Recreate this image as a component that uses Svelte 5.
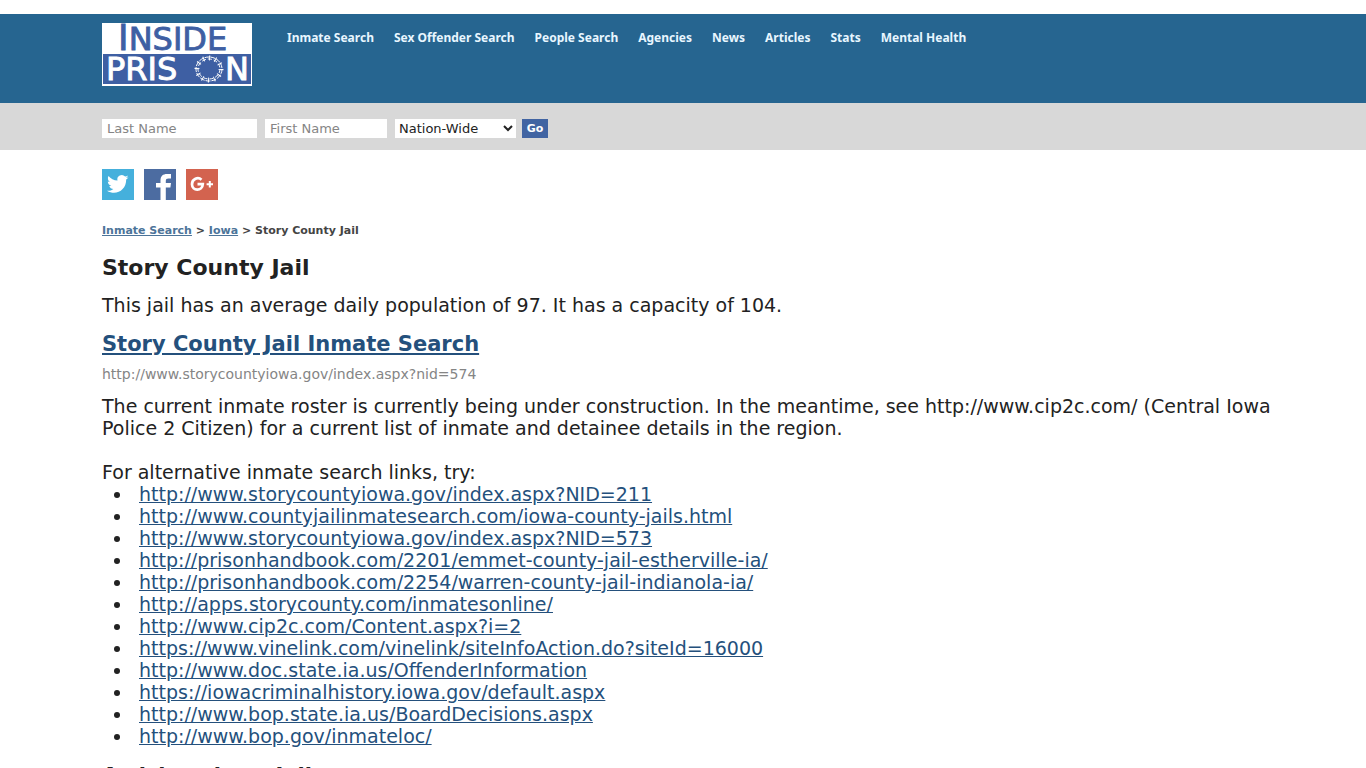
<script lang="ts">
	const nav = [
		'Inmate Search',
		'Sex Offender Search',
		'People Search',
		'Agencies',
		'News',
		'Articles',
		'Stats',
		'Mental Health'
	];

	const links = [
		'http://www.storycountyiowa.gov/index.aspx?NID=211',
		'http://www.countyjailinmatesearch.com/iowa-county-jails.html',
		'http://www.storycountyiowa.gov/index.aspx?NID=573',
		'http://prisonhandbook.com/2201/emmet-county-jail-estherville-ia/',
		'http://prisonhandbook.com/2254/warren-county-jail-indianola-ia/',
		'http://apps.storycounty.com/inmatesonline/',
		'http://www.cip2c.com/Content.aspx?i=2',
		'https://www.vinelink.com/vinelink/siteInfoAction.do?siteId=16000',
		'http://www.doc.state.ia.us/OffenderInformation',
		'https://iowacriminalhistory.iowa.gov/default.aspx',
		'http://www.bop.state.ia.us/BoardDecisions.aspx',
		'http://www.bop.gov/inmateloc/'
	];

	let lastName = $state('');
	let firstName = $state('');
	let region = $state('Nation-Wide');
</script>

<div class="page">
	<header>
		<div class="wrap top">
			<a class="logo" href="/" aria-label="Inside Prison">
				<svg width="150" height="63" viewBox="0 0 150 63">
					<rect width="150" height="63" fill="#fff" />
					<rect x="1" y="31" width="148" height="30" fill="#3e5fa3" />
					<g font-family="DejaVu Sans, sans-serif" font-size="32" stroke-width="0.9">
						<text x="16" y="27" fill="#3e5fa3" stroke="#3e5fa3"
							><tspan font-size="36">I</tspan>NSIDE</text
						>
						<g fill="#fff" stroke="#fff">
							<text x="4" y="57">PRIS</text>
							<text x="123" y="57">N</text>
						</g>
					</g>
					<g fill="none" stroke="#fff">
						<ellipse cx="107" cy="46" rx="13" ry="12" stroke-dasharray="5 1" />
						<ellipse cx="107" cy="46" rx="11" ry="10" stroke-dasharray="4 2" />
						<ellipse
							cx="107"
							cy="46"
							rx="12"
							ry="11"
							stroke-width="5"
							stroke-dasharray="1 5"
						/>
					</g>
				</svg>
			</a>
			<nav>
				{#each nav as item}
					<a href="#top">{item}</a>
				{/each}
			</nav>
		</div>
	</header>

	<div class="search">
		<form class="wrap" onsubmit={(e) => e.preventDefault()}>
			<input class="last" type="text" placeholder="Last Name" aria-label="Last Name" bind:value={lastName} />
			<input class="first" type="text" placeholder="First Name" aria-label="First Name" bind:value={firstName} />
			<select aria-label="State" bind:value={region}>
				<option>Nation-Wide</option>
				<option>Iowa</option>
			</select>
			<button type="submit">Go</button>
		</form>
	</div>

	<main class="wrap">
		<div class="social">
			<a href="#twitter" aria-label="Twitter">
				<svg width="32" height="31" viewBox="0 0 32 31">
					<rect width="32" height="31" fill="#45b0dc" />
					<path
						fill="#fff"
						d="M26.500 8.200c-.8.4-1.600.6-2.500.7.9-.5 1.600-1.400 1.900-2.400-.8.500-1.800.9-2.800 1.100a4.400 4.400 0 0 0-7.600 4c-3.600-.2-6.900-1.900-9-4.600-1.200 2-.6 4.600 1.300 5.900-.7 0-1.400-.2-2-.5 0 2.100 1.500 4 3.500 4.400-.6.2-1.300.2-2 .1.600 1.700 2.200 3 4.100 3-1.800 1.400-4.100 2.100-6.400 1.800 9 5.600 19.300-.6 19.200-11.200.9-.6 1.700-1.400 2.300-2.300z"
					/>
				</svg>
			</a>
			<a href="#facebook" aria-label="Facebook">
				<svg width="32" height="31" viewBox="0 0 32 31">
					<rect width="32" height="31" fill="#4c6ca1" />
					<path
						fill="#fff"
						d="M16.500 31V18.500H12V14h4.500v-2.500C16.500 7 19 5 23 5h4v4.500h-2.500c-2 0-2.700.8-2.700 2.500v2H27l-.6 4.500h-4.600V31z"
					/>
				</svg>
			</a>
			<a href="#google-plus" aria-label="Google Plus">
				<svg width="32" height="31" viewBox="0 0 32 31">
					<rect width="32" height="31" fill="#d3634f" />
					<path
						fill="none"
						stroke="#fff"
						stroke-width="2.700"
						d="M15.500 10.700C12 7.500 6 10 6 15.200c0 7 10.400 7.300 10.800 0H11.500"
					/>
					<path fill="#fff" d="M22.800 12h2v2.200H27v2h-2.200v2.300h-2v-2.300h-2.200v-2h2.200z" />
				</svg>
			</a>
		</div>

		<div class="crumbs">
			<a href="#inmate-search">Inmate Search</a> &gt; <a href="#iowa">Iowa</a> &gt; Story County Jail
		</div>

		<h1>Story County Jail</h1>
		<p>This jail has an average daily population of 97. It has a capacity of 104.</p>

		<h2><a href="#search">Story County Jail Inmate Search</a></h2>
		<div class="url">http://www.storycountyiowa.gov/index.aspx?nid=574</div>

		<p class="roster">
			The current inmate roster is currently being under construction. In the meantime, see
			http://www.cip2c.com/ (Central Iowa Police 2 Citizen) for a current list of inmate and
			detainee details in the region.
		</p>

		<p>For alternative inmate search links, try:</p>
		<ul>
			{#each links as link}
				<li><a href={link}>{link}</a></li>
			{/each}
		</ul>

		<h2 class="next">Articles about Jail</h2>
	</main>
</div>

<style>
	:global(body) {
		margin: 0;
		background: #fff;
	}

	.page {
		padding-top: 14px;
		font-family: Verdana, 'DejaVu Sans', sans-serif;
		font-size: 19px;
		line-height: 22px;
		color: #222;
	}

	.wrap {
		margin: 0 90px 0 102px;
	}

	header {
		background: #266590;
	}

	.top {
		display: flex;
		align-items: flex-start;
		gap: 35px;
		padding: 9px 0 17px;
	}

	.logo svg,
	.social svg {
		display: block;
	}

	.logo svg {
		overflow: visible;
	}

	nav {
		display: flex;
		gap: 20px;
		padding-top: 5px;
	}

	nav a {
		color: #e8f6ff;
		font-family: 'Noto Sans', sans-serif;
		font-size: 12px;
		font-weight: 700;
		line-height: 20px;
		text-decoration: none;
	}

	.search {
		background: #d8d8d8;
		padding: 16px 0 12px;
	}

	form {
		display: flex;
		align-items: center;
	}

	input,
	select,
	button {
		box-sizing: border-box;
		height: 19px;
		border: 0;
		border-radius: 0;
		background: #fff;
		font-family: Verdana, 'DejaVu Sans', sans-serif;
		font-size: 13px;
	}

	input {
		margin-right: 8px;
		padding: 0 5px;
	}

	input::placeholder {
		color: #858585;
	}

	.last {
		width: 155px;
	}

	.first {
		width: 122px;
	}

	select {
		width: 121px;
		margin-right: 6px;
		color: #222;
	}

	button {
		width: 26px;
		padding: 0;
		background: #4164a2;
		color: #fff;
		font-size: 11px;
		font-weight: 700;
	}

	.social {
		display: flex;
		gap: 10px;
		padding-top: 19px;
	}

	.crumbs {
		margin-top: 20px;
		font-size: 11px;
		font-weight: 700;
		line-height: 22px;
		color: #444;
	}

	.crumbs a {
		color: #4c7499;
	}

	h1,
	h2 {
		margin: 0;
		line-height: 28px;
	}

	h1 {
		margin-top: 12px;
		font-size: 22px;
	}

	h2 {
		font-size: 21px;
	}

	p {
		margin: 0;
	}

	h1 + p {
		margin: 12px 0 14px;
	}

	a {
		color: #24507c;
	}

	.url {
		margin: 5px 0 10px;
		color: #858585;
		font-size: 14px;
	}

	.roster {
		margin-bottom: 22px;
	}

	ul {
		margin: 0;
		padding-left: 31px;
	}

	li {
		padding-left: 6px;
	}

	.next {
		margin-top: 15px;
	}
</style>
